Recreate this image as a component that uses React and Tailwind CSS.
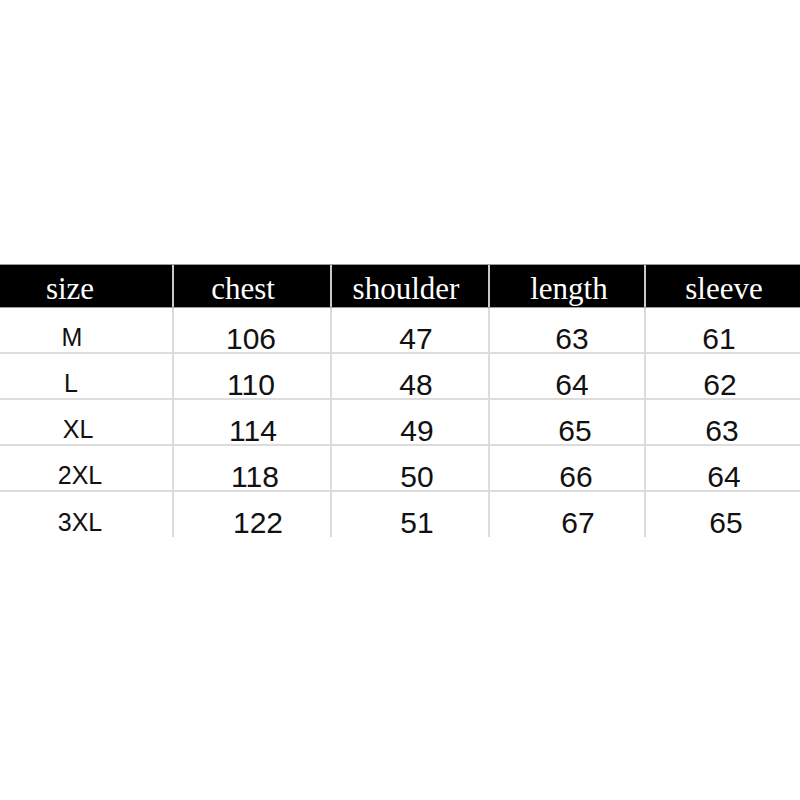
import React from "react";

const headers = [
  { t: "size", dx: -16 },
  { t: "chest", dx: -9 },
  { t: "shoulder", dx: -4 },
  { t: "length", dx: 2 },
  { t: "sleeve", dx: 1 },
];

const rows = [
  [["M", -14], ["106", -1], ["47", 6], ["63", 5], ["61", -4]],
  [["L", -15], ["110", -1], ["48", 6], ["64", 5], ["62", -3]],
  [["XL", -8], ["114", 1], ["49", 7], ["65", 8], ["63", -1]],
  [["2XL", -6], ["118", 3], ["50", 7], ["66", 9], ["64", 1]],
  [["3XL", -6], ["122", 6], ["51", 7], ["67", 11], ["65", 3]],
];

const widths = ["w-[174px]", "w-[158px]", "w-[158px]", "w-[156px]", "w-[154px]"];

export default function App() {
  return (
    <div className="w-[800px] h-[800px] bg-white pt-[264px]">
      <div className="flex h-[44px] bg-black border-t border-b border-[#9c9c9c]">
        {headers.map((h, i) => (
          <div
            key={h.t}
            className={`${widths[i]} flex items-center justify-center pt-[5px] ${i < 4 ? "border-r-2 border-[#c9c9c9]" : ""}`}
          >
            <span
              className="text-white text-[31px] leading-none"
              style={{ fontFamily: '"Liberation Serif", serif', transform: `translateX(${h.dx}px)` }}
            >
              {h.t}
            </span>
          </div>
        ))}
      </div>
      {rows.map((r, ri) => (
        <div
          key={ri}
          className={`flex ${ri < 4 ? "h-[46px] border-b-2 border-[#dcdcdc]" : "h-[45px]"}`}
        >
          {r.map(([v, dx], ci) => (
            <div
              key={ci}
              className={`${widths[ci]} flex items-center justify-center pt-4 ${ci < 4 ? "border-r-2 border-[#dcdcdc]" : ""}`}
            >
              <span
                className={`text-[#111] ${ci === 0 ? "text-[25px]" : "text-[30px]"}`}
                style={{ fontFamily: '"Liberation Sans", Arial, sans-serif', transform: `translateX(${dx}px)` }}
              >
                {v}
              </span>
            </div>
          ))}
        </div>
      ))}
    </div>
  );
}
